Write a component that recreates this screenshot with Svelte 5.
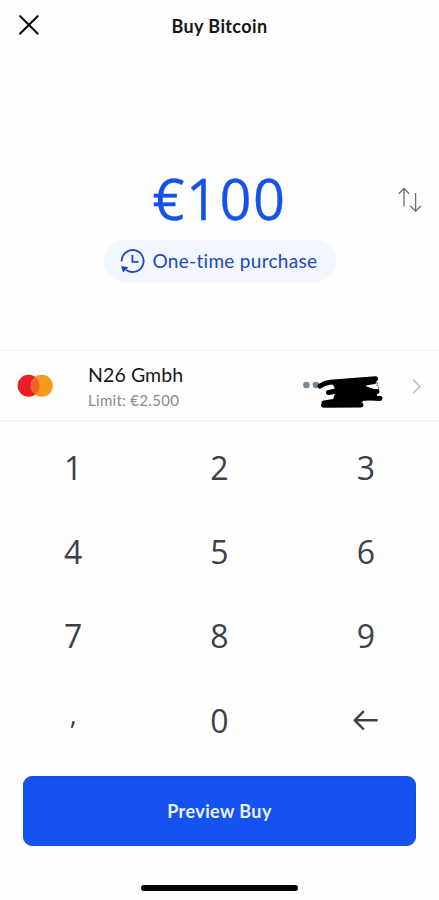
<script>
  let amount = $state("100");

  const keys = ["1", "2", "3", "4", "5", "6", "7", "8", "9", ",", "0", "back"];

  function press(key) {
    if (key === "back") {
      amount = amount.length > 1 ? amount.slice(0, -1) : "0";
      return;
    }
    if (key === "," && amount.includes(",")) return;
    amount = amount === "0" && key !== "," ? key : amount + key;
  }
</script>

<div class="screen">
  <header>
    <button class="close" aria-label="Close">
      <svg width="20" height="20" viewBox="0 0 20 20">
        <path d="M1.2 1.2 L18.6 18.6 M18.6 1.2 L1.2 18.6" fill="none" stroke="#0a0b0d" stroke-width="2.1" stroke-linecap="round" />
      </svg>
    </button>
    <h1>Buy Bitcoin</h1>
  </header>

  <section class="amount">
    <div class="value-row">
      <span class="value">€{amount}</span>
      <button class="swap" aria-label="Swap currency">
        <svg width="24" height="28" viewBox="0 0 24 28">
          <path d="M6 22.5 V4.5 M.8 9.8 L6 4.5 L11.2 9.8 M17.6 9 V27.3 M12.4 22 L17.6 27.3 L22.8 22" fill="none" stroke="#6b6f75" stroke-width="1.3" />
        </svg>
      </button>
    </div>
    <button class="frequency">
      <svg width="26" height="26" viewBox="0 0 26 26">
        <path d="M2.6 13.4 A11 11 0 1 1 7.2 22 Q10.2 24.1 13.6 24.1" fill="none" stroke="#2148b8" stroke-width="1.8" />
        <path d="M13.4 6.8 V13.9 H19.6" fill="none" stroke="#2148b8" stroke-width="1.8" />
        <path d="M2.2 18 L9.5 19.3 L4 24.4 Z" fill="#2148b8" />
      </svg>
      <span>One-time purchase</span>
    </button>
  </section>

  <section class="method">
    <svg class="card-logo" width="36" height="24" viewBox="0 0 36 24">
      <circle cx="11.6" cy="11.8" r="11" fill="#e91c27" />
      <circle cx="24.8" cy="11.8" r="11" fill="#f59b1c" />
      <path d="M18.2 3 A11 11 0 0 1 18.2 20.6 A11 11 0 0 1 18.2 3 Z" fill="#f2642a" />
    </svg>
    <div class="bank">
      <span class="name">N26 Gmbh</span>
      <span class="limit">Limit: €2.500</span>
    </div>
    <svg class="number" width="84" height="44" viewBox="0 0 84 44">
      <circle cx="4.4" cy="21" r="3.3" fill="#7d8791" />
      <circle cx="14" cy="21" r="3.3" fill="#7d8791" />
      <path d="M70 20 Q77 17 75 21.5 Q78 22 76 27" fill="none" stroke="#9299a1" stroke-width="1.2" />
      <path d="M18 22 Q23 18.5 28 18.2 L73.5 14.8" fill="none" stroke="#000" stroke-width="5" stroke-linecap="round" />
      <path d="M26.5 28.5 L37 26.5 M35 24 L72 17.5 M38 32 L75 27.5 M47 33 L78 34.5 M22 39 L41 36 M21.5 41.3 L59 40.9" fill="none" stroke="#000" stroke-width="5" stroke-linecap="round" />
      <path d="M29 17 L75 14 L73 18 L63 22 L75 26 L75 35 L61 37 L58 41 L30 41 L32 32 L35 26 L31 21 Z" fill="#000" />
    </svg>
    <svg class="chevron" width="10" height="16" viewBox="0 0 10 16">
      <path d="M1 1.6 L7.9 8.4 L1 15.2" fill="none" stroke="#bfc2c6" stroke-width="1.6" />
    </svg>
  </section>

  <section class="keypad">
    {#each keys as key}
      <button class="key" class:comma={key === ","} onclick={() => press(key)}>
        {#if key === "back"}
          <svg width="26" height="22" viewBox="0 0 26 22">
            <path d="M24.6 11.3 H2 M10.8 2.1 L1.8 11.3 L10.8 20.5" fill="none" stroke="#3c4148" stroke-width="2.5" stroke-linejoin="round" />
          </svg>
        {:else}
          {key}
        {/if}
      </button>
    {/each}
  </section>

  <footer>
    <button class="preview">Preview Buy</button>
    <div class="home-bar"></div>
  </footer>
</div>

<style>
  :global(body) {
    background: #fefefe;
  }
  .screen {
    width: 439px;
    height: 900px;
    display: flex;
    flex-direction: column;
    overflow: hidden;
    background: #fefefe;
    font-family: Lato, "Open Sans", sans-serif;
  }
  button {
    margin: 0;
    padding: 0;
    border: 0;
    background: none;
    font-family: inherit;
    cursor: pointer;
  }
  svg {
    display: block;
    flex: none;
  }
  header {
    height: 52px;
    display: grid;
    grid-template-columns: 60px 1fr 60px;
    align-items: center;
  }
  .close {
    padding: 0 0 3px 19px;
  }
  h1 {
    margin: 0;
    text-align: center;
    font-size: 18px;
    line-height: 24px;
    font-weight: 700;
    letter-spacing: 0.4px;
    color: #15171a;
  }
  .amount {
    height: 298px;
    display: flex;
    flex-direction: column;
    align-items: center;
    padding-top: 110px;
    box-sizing: border-box;
  }
  .value-row {
    width: 100%;
    height: 72px;
    display: grid;
    grid-template-columns: 60px 1fr 60px;
    align-items: center;
  }
  .value {
    grid-column: 2;
    text-align: center;
    font-family: "Open Sans", sans-serif;
    font-size: 56px;
    line-height: 72px;
    letter-spacing: 1.5px;
    color: #1652e8;
    -webkit-text-stroke: 0.3px #1652e8;
  }
  .swap {
    padding-left: 19px;
  }
  .frequency {
    width: 232px;
    height: 42px;
    margin-top: 6px;
    border-radius: 21px;
    display: flex;
    align-items: center;
    gap: 8px;
    padding-left: 15px;
    background: #f2f6fe;
    color: #2148b8;
    font-size: 19px;
    letter-spacing: 0.3px;
    white-space: nowrap;
  }
  .frequency span {
    padding-bottom: 2px;
  }
  .method {
    height: 71px;
    box-sizing: border-box;
    border-top: 1px solid #f0f1f3;
    border-bottom: 1px solid #f0f1f3;
    display: flex;
    align-items: center;
    padding: 0 17px;
  }
  .bank {
    width: 214px;
    margin-left: 35px;
    padding-top: 2px;
    display: flex;
    flex-direction: column;
  }
  .name {
    font-size: 19.5px;
    line-height: 26px;
    letter-spacing: 0.1px;
    color: #15171a;
  }
  .limit {
    font-size: 15px;
    line-height: 24px;
    letter-spacing: 0.3px;
    color: #868b91;
  }
  .chevron {
    margin-left: auto;
  }
  .keypad {
    height: 342px;
    box-sizing: border-box;
    padding-top: 4px;
    display: grid;
    grid-template-columns: repeat(3, 1fr);
    grid-template-rows: repeat(4, 84.4px);
  }
  .key {
    display: flex;
    align-items: center;
    justify-content: center;
    font-family: "Open Sans", sans-serif;
    font-size: 32px;
    color: #3c4148;
  }
  /* the comma sits at mid height, not on the digits' baseline */
  .comma {
    padding-bottom: 14px;
    font-size: 27px;
  }
  footer {
    padding: 13px 23px 0;
    display: flex;
    flex-direction: column;
    align-items: center;
  }
  .preview {
    width: 100%;
    height: 70px;
    box-sizing: border-box;
    border: 1px solid #1a4cdb;
    border-radius: 9px;
    background: #1552f0;
    color: #e9f2ff;
    font-size: 18px;
    font-weight: 700;
    letter-spacing: 0.4px;
  }
  .home-bar {
    width: 157px;
    height: 6px;
    margin-top: 39px;
    border-radius: 3px;
    background: #000;
  }
</style>
